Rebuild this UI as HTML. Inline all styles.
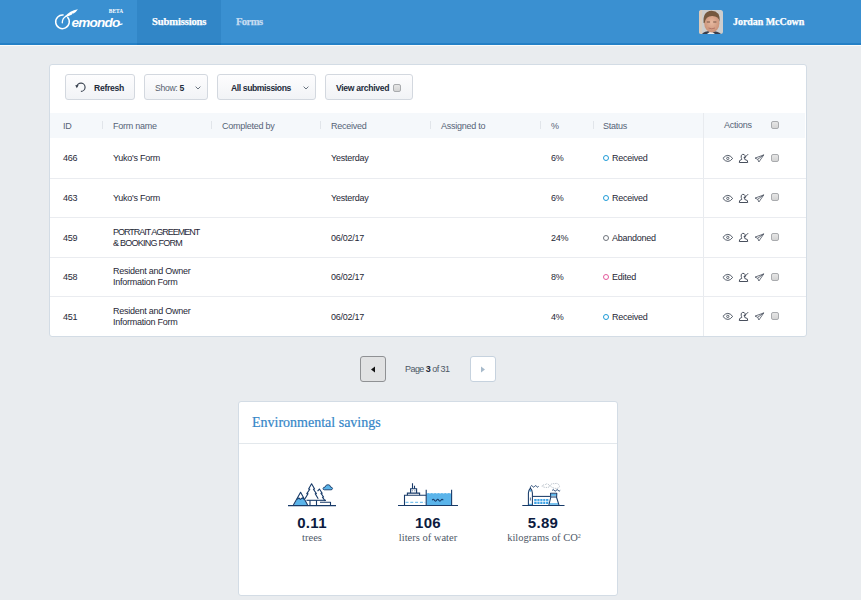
<!DOCTYPE html>
<html><head><meta charset="utf-8">
<style>
*{box-sizing:border-box;margin:0;padding:0}
html,body{width:861px;height:600px;overflow:hidden}
body{background:#E9ECEF;font-family:"Liberation Sans",sans-serif;position:relative;color:#2b3441}
.abs{position:absolute}
.slab{font-family:"Liberation Serif",serif;font-weight:bold;-webkit-text-stroke:0.25px currentColor}
.btn{position:absolute;top:74px;height:26px;border:1px solid #D3D8DF;border-radius:3px;background:linear-gradient(#fdfdfe,#f1f3f6);font-size:8.6px;color:#222b3a;font-weight:bold;letter-spacing:-0.3px}
.btn span{position:absolute;top:8px;line-height:11px;white-space:nowrap}
.th{position:absolute;top:122px;font-size:9px;color:#566377;line-height:9px;letter-spacing:-0.25px}
.sep{position:absolute;top:121px;width:1px;height:8px;background:#E1E5EA}
.row{position:absolute;left:50px;width:756px;height:1px;background:#EAECF0}
.td{position:absolute;font-size:9px;color:#1f2836;line-height:11px;letter-spacing:-0.25px;white-space:nowrap}
.up{letter-spacing:-0.75px}
.cb{position:absolute;width:8px;height:8px;border:1px solid #A9ABAE;border-radius:2px;background:linear-gradient(#e6e6e6,#d4d4d4)}
.dot{display:inline-block;width:6px;height:6px;border-radius:50%;border:1.8px solid #1E9BD7;margin-right:3px;vertical-align:0.5px}
.ic{position:absolute}
.num{position:absolute;width:120px;text-align:center;font-size:15px;font-weight:bold;color:#0C1B40;letter-spacing:0.3px;line-height:15px}
.lbl{position:absolute;width:120px;text-align:center;font-family:"Liberation Serif",serif;font-size:10.5px;color:#4e5867;line-height:12px;white-space:nowrap}
</style></head><body>
<!-- header -->
<div class="abs" style="left:0;top:0;width:861px;height:43px;background:#3A90D1"></div>
<div class="abs" style="left:0;top:43px;width:861px;height:2px;background:#2480C6"></div>
<div class="abs" style="left:0;top:45px;width:861px;height:1px;background:#FBFCFA"></div>
<div class="abs" style="left:137px;top:0;width:84px;height:43px;background:#3186C7"></div>
<div class="abs" style="left:137px;top:43px;width:84px;height:2px;background:#1F78BD"></div>

<svg class="abs" style="left:50px;top:2px" width="80" height="36" viewBox="0 0 80 36">
  <path d="M13.6 13.1 A6.8 6.8 0 1 0 17.4 15.1" fill="none" stroke="#fff" stroke-width="1.5"/>
  <path d="M12.3 20.8 Q12.2 16.5 15.8 14.2" fill="none" stroke="#fff" stroke-width="1.3" stroke-linecap="round"/>
  <path d="M15 14.6 Q19.5 8.6 27.9 7.2 Q26 10.2 23.6 11.6 L22.2 11.5 Q22.5 12.3 21.5 12.8 Q19 14.3 15.6 15.2 Z" fill="#fff"/>
  <text x="21.6" y="25.1" font-family="Liberation Sans" font-style="italic" font-weight="bold" font-size="13.6" fill="#fff" letter-spacing="-0.85">emondo</text>
  <path d="M69 22.6 Q71 22.6 72.6 21.8" fill="none" stroke="#fff" stroke-width="1.1"/>
  <text x="58.8" y="11" font-family="Liberation Serif" font-weight="bold" font-size="5.4" fill="#fff">BETA</text>
</svg>
<div class="abs slab" style="left:152px;top:15px;font-size:10.6px;color:#fff;line-height:14px;letter-spacing:-0.15px">Submissions</div>
<div class="abs slab" style="left:236px;top:15px;font-size:10.6px;color:#C4DCF1;line-height:14px;letter-spacing:-0.6px">Forms</div>
<svg class="abs" style="left:699px;top:10px" width="24" height="24" viewBox="0 0 24 24">
  <defs><clipPath id="av"><rect x="0" y="0" width="24" height="24" rx="2.5"/></clipPath>
  <radialGradient id="sk" cx="0.5" cy="0.45" r="0.6"><stop offset="0" stop-color="#e7b9a0"/><stop offset="1" stop-color="#c78e74"/></radialGradient></defs>
  <g clip-path="url(#av)">
    <rect width="24" height="24" fill="#cdcdcd"/>
    <rect x="0" y="0" width="3" height="24" fill="#dccbbb"/>
    <path d="M3 24 Q5 21 12 21 Q19 21 22 24 Z" fill="#3a3d4a"/>
    <path d="M8 24 L12 21 L16 24Z" fill="#f0f0f0"/>
    <ellipse cx="12.8" cy="13.2" rx="7.6" ry="9.2" fill="url(#sk)"/>
    <path d="M4.6 13 Q3.6 1.2 12.5 0.8 Q21.5 1 20.8 12 Q19.6 5.8 13 6 Q6.6 6.2 5.6 13Z" fill="#75583f"/>
    <path d="M7.8 12 h3.2 M14.2 12 h3.2" stroke="#6b4a3c" stroke-width="0.9"/>
    <path d="M9.5 18 Q12.8 19.6 16 18" stroke="#b07262" stroke-width="0.9" fill="none"/>
  </g>
</svg>
<div class="abs slab" style="left:733px;top:15px;font-size:10px;color:#fff;line-height:14px;letter-spacing:-0.05px">Jordan McCown</div>

<!-- card -->
<div class="abs" style="left:49px;top:64px;width:758px;height:273px;background:#fff;border:1px solid #D3DCE5;border-radius:3px"></div>

<div class="btn" style="left:65px;width:70px">
  <svg class="abs" style="left:9px;top:6px" width="13" height="13" viewBox="0 0 13 13"><path d="M1.9 5.7 A4.1 4.1 0 1 1 5.9 10.3" fill="none" stroke="#3b4452" stroke-width="1.15"/><path d="M0.2 4.2 L3.6 4.0 L1.8 7.2 Z" fill="#3b4452"/></svg>
  <span style="left:28px">Refresh</span></div>
<div class="btn" style="left:144px;width:64px"><span style="left:10px;font-weight:normal;color:#56606e;letter-spacing:-0.3px">Show: <b style="color:#222b3a">5</b></span>
  <svg class="abs" style="left:50px;top:11px" width="6" height="4" viewBox="0 0 6 4"><path d="M0.6 0.6 L3 3 L5.4 0.6" fill="none" stroke="#6a7480" stroke-width="1"/></svg></div>
<div class="btn" style="left:217px;width:99px"><span style="left:13px;letter-spacing:-0.4px">All submissions</span>
  <svg class="abs" style="left:85px;top:11px" width="6" height="4" viewBox="0 0 6 4"><path d="M0.6 0.6 L3 3 L5.4 0.6" fill="none" stroke="#6a7480" stroke-width="1"/></svg></div>
<div class="btn" style="left:325px;width:88px"><span style="left:10px;letter-spacing:-0.3px">View archived</span>
  <div class="cb" style="left:67px;top:9px"></div></div>

<div class="abs" style="left:50px;top:113px;width:755px;height:25px;background:#F5F8FB"></div>
<div class="th" style="left:63px">ID</div>
<div class="sep" style="left:102px"></div>
<div class="th" style="left:113px">Form name</div>
<div class="sep" style="left:211px"></div>
<div class="th" style="left:222px">Completed by</div>
<div class="sep" style="left:320px"></div>
<div class="th" style="left:331px">Received</div>
<div class="sep" style="left:430px"></div>
<div class="th" style="left:441px">Assigned to</div>
<div class="sep" style="left:540px"></div>
<div class="th" style="left:551px">%</div>
<div class="sep" style="left:593px"></div>
<div class="th" style="left:603px">Status</div>
<div class="abs" style="left:703px;top:113px;width:1px;height:223px;background:#E8EBEF"></div>
<div class="th" style="left:724px;top:121px">Actions</div>
<div class="cb" style="left:771px;top:121px"></div>

<div class="row" style="top:178px"></div>
<div class="row" style="top:217px"></div>
<div class="row" style="top:257px"></div>
<div class="row" style="top:296px"></div>

<div class="td" style="left:63px;top:153px">466</div>
<div class="td" style="left:113px;top:153px">Yuko's Form</div>
<div class="td" style="left:331px;top:153px">Yesterday</div>
<div class="td" style="left:551px;top:153px">6%</div>
<div class="td" style="left:603px;top:153px"><i class="dot"></i>Received</div>

<div class="td" style="left:63px;top:193px">463</div>
<div class="td" style="left:113px;top:193px">Yuko's Form</div>
<div class="td" style="left:331px;top:193px">Yesterday</div>
<div class="td" style="left:551px;top:193px">6%</div>
<div class="td" style="left:603px;top:193px"><i class="dot"></i>Received</div>

<div class="td" style="left:63px;top:233px">459</div>
<div class="td up" style="left:113px;top:227px"><span style="letter-spacing:-1px">PORTRAIT AGREEMENT</span><br>&amp; BOOKING FORM</div>
<div class="td" style="left:331px;top:233px">06/02/17</div>
<div class="td" style="left:551px;top:233px">24%</div>
<div class="td" style="left:603px;top:233px"><i class="dot" style="border-color:#6f747c"></i>Abandoned</div>

<div class="td" style="left:63px;top:272px">458</div>
<div class="td" style="left:113px;top:266px">Resident and Owner<br>Information Form</div>
<div class="td" style="left:331px;top:272px">06/02/17</div>
<div class="td" style="left:551px;top:272px">8%</div>
<div class="td" style="left:603px;top:272px"><i class="dot" style="border-color:#E45A9C"></i>Edited</div>

<div class="td" style="left:63px;top:312px">451</div>
<div class="td" style="left:113px;top:306px">Resident and Owner<br>Information Form</div>
<div class="td" style="left:331px;top:312px">06/02/17</div>
<div class="td" style="left:551px;top:312px">4%</div>
<div class="td" style="left:603px;top:312px"><i class="dot"></i>Received</div>

<!-- action icons (template repeated) -->
<svg class="abs" style="left:718px;top:148px" width="66" height="180" viewBox="0 0 66 180">
  <defs>
    <g id="acts">
      <path d="M4.9 10.4 Q9.8 4.3 14.7 10.4 Q9.8 16.5 4.9 10.4Z" fill="none" stroke="#4a5260" stroke-width="0.95"/>
      <circle cx="9.8" cy="10.4" r="1.15" fill="none" stroke="#4a5260" stroke-width="0.9"/>
      <path d="M21.3 14.5 H29.7 Q30.4 12 26.8 11.5 L26.4 10.8 Q27.6 9.6 27.2 7.8 Q26.3 5.9 24.6 6.4 Q22.7 6.9 23.2 9.3 Q23.6 10.5 23.8 11.4 Q20.8 12.1 21.3 14.5Z" fill="none" stroke="#3e4654" stroke-width="0.95"/>
      <path d="M30.2 6.1 L26.4 9.9" stroke="#3e4654" stroke-width="0.9"/>
      <path d="M25.4 9.4 L27.4 10.6 L26.4 8.4Z" fill="#3e4654"/>
      <path d="M37 10.1 L45.8 6.9 L40.9 14 L39.7 11.3 Z M39.7 11.3 L45.8 6.9" fill="none" stroke="#4a5260" stroke-width="0.8" stroke-linejoin="round"/>
    </g>
  </defs>
  <use href="#acts" x="0" y="0"/>
  <use href="#acts" x="0" y="40"/>
  <use href="#acts" x="0" y="79"/>
  <use href="#acts" x="0" y="119"/>
  <use href="#acts" x="0" y="158"/>
</svg>
<div class="cb" style="left:771px;top:154px"></div>
<div class="cb" style="left:771px;top:193px"></div>
<div class="cb" style="left:771px;top:233px"></div>
<div class="cb" style="left:771px;top:273px"></div>
<div class="cb" style="left:771px;top:312px"></div>

<!-- pagination -->
<div class="abs" style="left:360px;top:356px;width:26px;height:26px;border:1px solid #8f9194;border-radius:3px;background:#E1E2E3"></div>
<svg class="abs" style="left:370px;top:366px" width="6" height="7" viewBox="0 0 6 7"><path d="M5 0.5 L1 3.5 L5 6.5Z" fill="#111"/></svg>
<div class="abs" style="left:405px;top:364px;font-size:9px;color:#4d5866;line-height:11px;letter-spacing:-0.55px;white-space:nowrap">Page <b style="color:#1f2735">3</b> of 31</div>
<div class="abs" style="left:470px;top:356px;width:26px;height:26px;border:1px solid #C6D2DE;border-radius:3px;background:#fff"></div>
<svg class="abs" style="left:480px;top:366px" width="6" height="7" viewBox="0 0 6 7"><path d="M1 0.5 L5 3.5 L1 6.5Z" fill="#A7BACB"/></svg>

<!-- env card -->
<div class="abs" style="left:238px;top:401px;width:380px;height:195px;background:#fff;border:1px solid #D3DCE5;border-radius:3px"></div>
<div class="abs" style="left:239px;top:443px;width:378px;height:1px;background:#E3E8EC"></div>
<div class="abs" style="left:252px;top:415px;font-family:'Liberation Serif',serif;font-size:14px;color:#3586C8;-webkit-text-stroke:0.2px #3586C8;line-height:16px;white-space:nowrap">Environmental savings</div>

<!-- trees icon -->
<svg class="ic" style="left:286px;top:480px" width="52" height="28" viewBox="0 0 52 28">
  <path d="M8 25 L11 19.2 L12.8 18 L14.4 19.4 L16.3 17.8 L18.2 19.2 L21.2 25Z" fill="#5AB4EA"/>
  <g fill="none" stroke="#173a68" stroke-width="1.1" stroke-linejoin="round">
    <path d="M7.4 25 L14.6 12.3 L21.6 25"/>
    <path d="M11 19.2 L12.8 18 L14.4 19.4 L16.3 17.8 L18.2 19.2"/>
    <path d="M19 18.8 L22 13.8 L20.8 13.6 L23.8 9.2 L22.6 9 L25.6 3.8 L28.6 9 L27.4 9.2 L30.4 13.6 L29.2 13.8 L32.2 18.8"/>
    <path d="M31.6 11.2 L33.4 9 L36.2 13.2 L35 13.4 L37.6 17 L36.4 17.2 L39.2 21"/>
    <path d="M20.5 20.3 H40"/>
    <path d="M24 20.3 V25 M30.5 20.3 V25"/>
    <path d="M34 22.2 H44.5 V25"/>
  </g>
  <path d="M38.4 9.8 Q36.9 9.8 37.1 8.4 Q37.4 6.9 39 7.2 Q39.6 4.5 42.2 4.7 Q44.5 4.9 44.6 7.1 Q46.6 7.1 46.5 8.7 Q46.3 9.8 45 9.8Z" fill="#5AB4EA" stroke="#173a68" stroke-width="0.9"/>
  <path d="M2 25.6 H50" stroke="#173a68" stroke-width="1.2"/>
</svg>
<!-- water icon -->
<svg class="ic" style="left:396px;top:480px" width="64" height="28" viewBox="0 0 64 28">
  <path d="M30.5 13.6 Q32.3 12.2 34 13.6 Q35.7 12.2 37.4 13.6 Q39.1 12.2 40.8 13.6 Q42.5 12.2 44.2 13.6 Q45.9 12.2 47.6 13.6 Q49.3 12.2 51 13.6 Q52.7 12.2 55 13.6 V25 H30.5Z" fill="#5AB4EA"/>
  <g fill="none" stroke="#173a68" stroke-width="1.1">
    <path d="M8.5 25 V15.2 H30.2"/>
    <path d="M11.4 15.2 V13.1 H23.6 V15.2"/>
    <path d="M14.6 13.1 V8.8 H20.6 V13.1"/>
    <path d="M16.5 8.8 V3.3 M18.5 8.8 V5.8"/>
    <path d="M30.2 9.8 V25 M55.6 9.8 V25"/>
    <path d="M36.2 20.2 q1.1 -1.8 2.2 0 t2.2 0 t2.2 0 t2.2 0 t2.2 0" stroke-width="1.1"/>
  </g>
  <path d="M9.5 22.3 H29.5" stroke="#5AB4EA" stroke-width="1" stroke-dasharray="3 1.8"/>
  <path d="M15.8 10.8 h1 M18.4 10.8 h1" stroke="#173a68" stroke-width="0.8"/>
  <path d="M2 25.5 H62" stroke="#173a68" stroke-width="1.2"/>
</svg>
<!-- factory icon -->
<svg class="ic" style="left:520px;top:480px" width="48" height="28" viewBox="0 0 48 28">
  <rect x="14.2" y="19" width="14.2" height="5" fill="#3FA3E6"/>
  <g stroke="#fff" stroke-width="0.75">
    <path d="M14 21.4 H28.6"/>
    <path d="M17 19 V24 M19.9 19 V24 M22.8 19 V24 M25.6 19 V24"/>
  </g>
  <g fill="#5AB4EA">
    <rect x="31" y="14" width="5.6" height="1.8"/>
    <rect x="29.5" y="23.2" width="9" height="1.6"/>
    <rect x="9" y="23.8" width="3" height="1.2"/>
    <circle cx="10.4" cy="10.8" r="1"/>
  </g>
  <g fill="none" stroke="#173a68" stroke-width="1.05" stroke-linejoin="round">
    <path d="M8.4 25 V13 Q8.6 10 10.4 8.2 Q12.2 10 12.4 13 V25"/>
    <path d="M10.4 8.2 V6.8" stroke-width="0.8"/>
    <path d="M12.4 16.4 H30"/>
    <path d="M28.9 25 L30.7 17.5 L30.5 13.2 H36.8 L36.6 17.5 L39 25"/>
    <path d="M30.6 17 H36.7"/>
    <path d="M10.4 17.5 V20.5" stroke-width="0.7"/>
    <path d="M10.6 6.4 q1 -1.5 2 0 t2 0 t2 0 t2 0" stroke-width="0.95"/>
    <path d="M32.2 10.4 q1 -1.5 2 0 t2 0 t2 0 t2 0" stroke-width="0.95"/>
  </g>
  <g fill="none" stroke="#8c99a8" stroke-width="0.75" stroke-dasharray="0.9 0.9">
    <path d="M21.8 6.2 Q23 4.4 24.8 5.2 Q26.6 2.8 28.6 4.6 Q30.6 6.4 28.4 7.2 Q25 8 21.8 6.2Z"/>
    <path d="M30 5.6 Q31.6 3 34.6 3.8 Q37.4 2.6 39 5 Q40.6 7.6 37 8.4 Q33 8.8 30 5.6Z"/>
  </g>
  <path d="M2.3 25.5 H44.5" stroke="#173a68" stroke-width="1.2"/>
</svg>

<div class="num" style="left:252px;top:515px">0.11</div>
<div class="lbl" style="left:252px;top:532px">trees</div>
<div class="num" style="left:368px;top:515px">106</div>
<div class="lbl" style="left:368px;top:532px">liters of water</div>
<div class="num" style="left:483px;top:515px">5.89</div>
<div class="lbl" style="left:484px;top:532px">kilograms of CO<span style="font-size:6px;position:relative;top:-3px;line-height:0">2</span></div>
</body></html>
